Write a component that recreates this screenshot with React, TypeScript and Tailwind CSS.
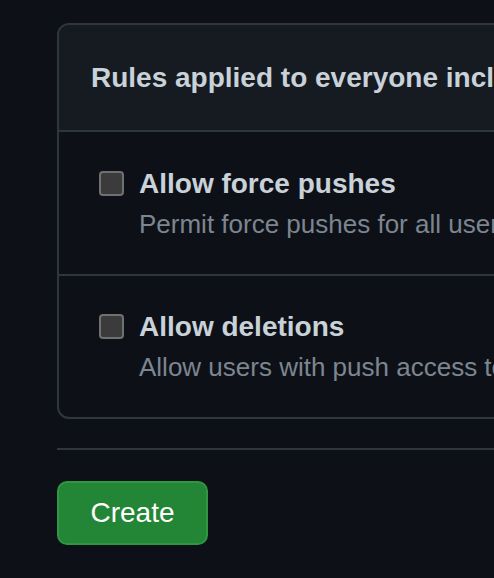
import React from "react";

const rules = [
  {
    title: "Allow force pushes",
    desc: "Permit force pushes for all users with push access.",
    pad: "pt-[32px] pb-[32px] border-b-2 border-[#30363d]",
  },
  {
    title: "Allow deletions",
    desc: "Allow users with push access to delete matching branches.",
    pad: "pt-[31px] pb-[32px]",
  },
];

function Checkbox() {
  return (
    <span className="mt-[7px] block h-[25px] w-[25px] shrink-0 rounded-[4px] border-2 border-[#707070] bg-[#3b3b3b]" />
  );
}

export default function App() {
  return (
    <div
      className="h-[578px] w-[494px] overflow-hidden bg-[#0d1117] pl-[57px] pt-[23px]"
      style={{ fontFamily: '"Liberation Sans", Arial, sans-serif' }}
    >
      <div className="w-[900px]">
        <div className="overflow-hidden rounded-[12px] border-2 border-[#30363d]">
          <div className="flex h-[107px] items-center border-b-2 border-[#30363d] bg-[#161b22] px-[32px]">
            <h2 className="text-[28px] font-bold leading-[40px] text-[#c9d1d9]">
              Rules applied to everyone including administrators
            </h2>
          </div>
          {rules.map((r) => (
            <div key={r.title} className={"flex gap-[15px] px-[40px] " + r.pad}>
              <Checkbox />
              <div>
                <div className="text-[28px] font-bold leading-[40px] text-[#c9d1d9]">
                  {r.title}
                </div>
                <div className="mt-[2px] text-[26px] leading-[36px] text-[#7d8590]">
                  {r.desc}
                </div>
              </div>
            </div>
          ))}
        </div>
        <div className="mt-[29px] h-[2px] bg-[#30363d]" />
        <button className="mt-[31px] flex h-[64px] w-[151px] items-center justify-center rounded-[10px] border-2 border-[#2f9641] bg-[#238636] text-[28px] text-white">
          Create
        </button>
      </div>
    </div>
  );
}
